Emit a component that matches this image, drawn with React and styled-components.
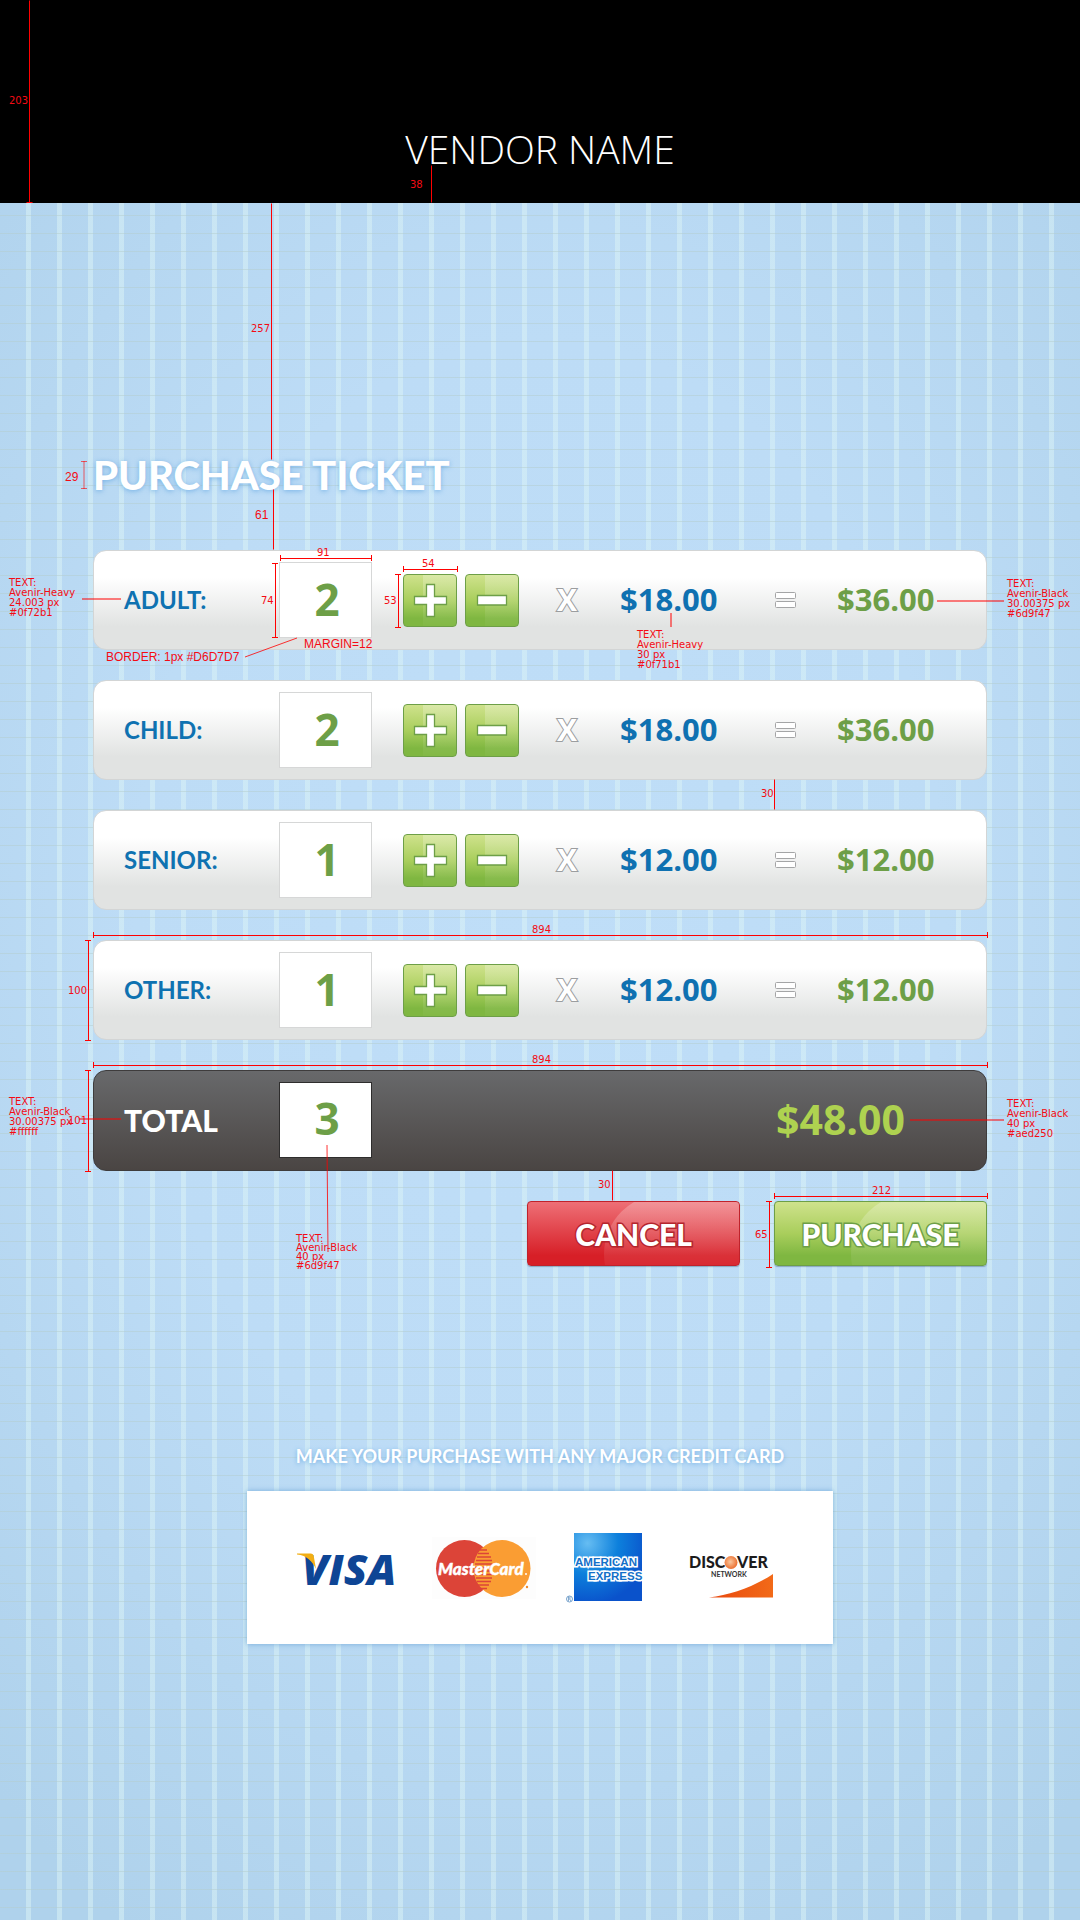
import React, { useState } from "react";
import styled, { createGlobalStyle, css } from "styled-components";

const GlobalStyle = createGlobalStyle`
  *, *::before, *::after { box-sizing: border-box; }
  body {
    margin: 0;
    background: #b3d6f0;
    font-family: Lato, "Open Sans", sans-serif;
  }
`;

const Page = styled.div`
  position: relative;
  display: flex;
  flex-direction: column;
  min-height: 100vh;
  overflow: hidden;
`;

const Header = styled.header`
  padding: 125px 24px 30px;
  background: #000;
  text-align: center;
`;

const VendorName = styled.h1`
  margin: 0;
  color: #fff;
  font-family: "Open Sans", sans-serif;
  font-size: 39px;
  font-weight: 300;
  line-height: 48px;
`;

const Backdrop = styled.main`
  flex: 1;
  display: flex;
  flex-direction: column;
  align-items: center;
  padding: 248px 24px 120px;
  background:
    repeating-linear-gradient(to bottom, transparent 0 12px, rgba(180, 205, 205, 0.5) 12px 13px, transparent 13px 18px),
    repeating-linear-gradient(to right, transparent 0 26px, rgba(220, 244, 246, 0.5) 26px 31px),
    radial-gradient(ellipse 75% 68% at 50% 42%, #bfdef8 0%, #bddcf6 50%, #afd2ec 100%);
`;

const Order = styled.form`
  display: flex;
  flex-direction: column;
  gap: 30px;
  width: 100%;
  max-width: 894px;
`;

const Title = styled.h2`
  margin: 0 0 21px;
  color: #fff;
  font-size: 40px;
  font-weight: 900;
  line-height: 48px;
  text-shadow: 0 1px 5px rgba(70, 150, 220, 0.6);
`;

const Row = styled.div`
  display: grid;
  grid-template-columns: 155fr 124fr 154fr 63fr 155fr 62fr 149fr;
  align-items: center;
  height: 100px;
  padding-left: 30px;
  border: 1px solid #d3d5d5;
  border-radius: 13px;
  background: linear-gradient(#fff 0%, #fff 27%, #e1e3e2 77%, #e1e3e2 100%);
`;

const TotalRow = styled(Row)`
  grid-template-columns: 155fr 124fr 373fr 210fr;
  height: 101px;
  padding-bottom: 2px;
  border-color: #3e3c3c;
  background: linear-gradient(#68696b, #4a4543);
`;

const Label = styled.label`
  color: ${(p) => (p.$total ? "#fff" : "#0f72b1")};
  font-size: ${(p) => (p.$total ? 30 : 24)}px;
  font-weight: ${(p) => (p.$total ? 900 : 700)};
  line-height: 36px;
`;

const Quantity = styled.input`
  width: 93px;
  height: 76px;
  padding: 0 0 3px 3px;
  border: 1px solid ${(p) => (p.$total ? "#2e2d2d" : "#d6d7d7")};
  border-radius: 0;
  outline: 0;
  background: #fff;
  color: #6d9f47;
  font: 700 44px "Open Sans", sans-serif;
  text-align: center;
`;

const Steppers = styled.div`
  display: flex;
  gap: 8px;
`;

const green = css`
  border: 1px solid #6d9f47;
  background: linear-gradient(#cfe28c 0%, #a9ce5c 50%, #7fb741 85%);
`;

const red = css`
  border: 1px solid #c0222b;
  background: linear-gradient(#ee6f76 0%, #d71f27 85%);
`;

const Glossy = styled.button`
  position: relative;
  overflow: hidden;
  padding: 0;
  border-radius: 4px;
  cursor: pointer;
  ${(p) => (p.$red ? red : green)}

  &::before {
    content: "";
    position: absolute;
    left: 36%;
    right: 0;
    top: -8px;
    height: 120px;
    border-radius: 60px 0 0 60px;
    background: linear-gradient(rgba(255, 255, 255, 0.28), rgba(255, 255, 255, 0.04) 62%);
  }
`;

const Stepper = styled(Glossy)`
  width: 54px;
  height: 53px;

  svg { position: relative; display: block; margin: 0 auto; }

  &::before {
    left: 19px;
    top: -64px;
    height: 208px;
    border-radius: 104px 0 0 104px;
    background: linear-gradient(rgba(255, 255, 255, 0.26) 30%, rgba(255, 255, 255, 0.02) 56%);
  }
`;

const Times = styled.span`
  color: #fff;
  font-family: "Open Sans", sans-serif;
  font-size: 30px;
  font-weight: 700;
  line-height: 36px;
  -webkit-text-stroke: 2px #9b9d9f;
  paint-order: stroke fill;
`;

const Price = styled.output`
  color: ${(p) => p.$color};
  font-family: "Open Sans", sans-serif;
  font-size: ${(p) => (p.$total ? 41 : 31)}px;
  font-weight: ${(p) => p.$weight};
  line-height: 36px;
  padding-bottom: 2px;
`;

const Actions = styled.div`
  display: flex;
  justify-content: flex-end;
  gap: 34px;
`;

const Action = styled(Glossy)`
  width: 213px;
  height: 65px;
  box-shadow: 0 1px 1px rgba(60, 90, 110, 0.4);
`;

const ActionText = styled.span`
  position: relative;
  color: #fff;
  font: 900 30px/36px Lato, "Open Sans", sans-serif;
  -webkit-text-stroke: 3px ${(p) => (p.$red ? "#b5252d" : "#6d9f47")};
  paint-order: stroke fill;
`;

const Payment = styled.section`
  display: flex;
  flex-direction: column;
  align-items: center;
  gap: 23px;
  width: 100%;
  margin-top: 178px;
`;

const PaymentTitle = styled.h3`
  margin: 0;
  color: #fff;
  font-size: 18px;
  font-weight: 700;
  line-height: 24px;
  text-align: center;
  text-shadow: 0 1px 4px rgba(70, 150, 220, 0.6);
`;

const Cards = styled.div`
  display: flex;
  justify-content: space-between;
  align-items: center;
  width: 100%;
  max-width: 586px;
  height: 153px;
  padding: 0 59px 0 50px;
  background: #fff;
  box-shadow: 0 0 5px rgba(70, 140, 200, 0.6);
`;

/* Measurement layer drawn over the design, centred with the order form. */
const SpecLayer = styled.div`
  position: absolute;
  top: 0;
  left: 50%;
  width: 1080px;
  height: 1300px;
  margin-left: -540px;
  pointer-events: none;

  > svg { position: absolute; top: 0; left: 0; }
`;

const Note = styled.span`
  position: absolute;
  left: ${(p) => p.$x}px;
  top: ${(p) => p.$y}px;
  color: #f40b14;
  font-family: "DejaVu Sans", Verdana, sans-serif;
  font-size: 10px;
  line-height: ${(p) => p.$line || 10}px;
  white-space: pre;
`;

const PlainNote = styled(Note)`
  font-family: "Liberation Sans", Arial, sans-serif;
  font-size: 12px;
  line-height: 14px;
`;

const PlusIcon = () => (
  <svg width="35" height="35" viewBox="0 0 35 35" aria-hidden="true">
    <path d="M13.500 1.500h8v12h12v8h-12v12h-8v-12h-12v-8h12z" fill="#fff" stroke="#6d9f47" strokeWidth="1.300" />
  </svg>
);

const MinusIcon = () => (
  <svg width="32" height="35" viewBox="0 0 32 35" aria-hidden="true">
    <path d="M1.500 12.500h29v9.500h-29z" fill="#fff" stroke="#6d9f47" strokeWidth="1.300" />
  </svg>
);

const EqualsIcon = () => (
  <svg width="21" height="17" viewBox="0 0 21 17" role="img" aria-label="equals">
    <rect x=".5" y=".5" width="20" height="6" rx="1" fill="#fff" stroke="#a4a5a6" />
    <rect x=".5" y="9.500" width="20" height="6" rx="1" fill="#fff" stroke="#a4a5a6" />
  </svg>
);

const Visa = () => (
  <svg width="104" height="60" viewBox="0 0 104 60" role="img" aria-label="Visa">
    <text x="5" y="47" fill="#0e4595" fontFamily="Open Sans" fontStyle="italic" fontWeight="800" fontSize="43">VISA</text>
    <path d="M0 15h6l9 8v-4L8 15z" fill="#fff" />
    <path d="M0 15.500h13.500c2 0 3 1 3.300 3L19 31C15 23 10 17.500 0 16.500z" fill="#f2ae14" />
  </svg>
);

const MasterCard = () => (
  <svg width="104" height="62" viewBox="0 0 104 62" role="img" aria-label="MasterCard">
    <rect width="104" height="62" fill="#fdfdfd" />
    <circle cx="32.500" cy="31.500" r="28.500" fill="#dc4438" />
    <circle cx="70" cy="31.500" r="28.500" fill="#fa9d33" />
    <g stroke="#dc4438" strokeWidth="1.300">
      <path d="M48 13h7M46 16.500h11M45 20h14M44 23.500h16M43 27h17M42 30.500h18M42 34h18M43 37.500h17M44 41h16M45 44.500h14M46 48h11M48 51.500h7" />
    </g>
    <text x="6" y="38" fill="#fff" stroke="#fff" strokeWidth=".4" fontFamily="Lato" fontStyle="italic" fontWeight="900" fontSize="17">MasterCard</text>
    <circle cx="94" cy="37" r="1" fill="#fff" />
    <circle cx="95" cy="50" r="1.200" fill="#ee8a2a" />
  </svg>
);

const Amex = () => (
  <svg width="92" height="70" viewBox="0 0 92 70" role="img" aria-label="American Express">
    <defs>
      <radialGradient id="amexGlow" cx="20%" cy="15%" r="90%">
        <stop offset="0" stopColor="#66bdf2" />
        <stop offset=".5" stopColor="#0d80dc" />
        <stop offset="1" stopColor="#0a52cb" />
      </radialGradient>
    </defs>
    <rect x="8" y="0" width="68" height="68" fill="url(#amexGlow)" />
    <g fontFamily="Liberation Sans" fontWeight="700" fontSize="11.500" fill="#1470c8" stroke="#fff" strokeWidth="3" paintOrder="stroke">
      <text x="9" y="33">AMERICAN</text>
      <text x="22" y="47">EXPRESS</text>
    </g>
    <circle cx="3.500" cy="66" r="3" fill="none" stroke="#3a78b4" strokeWidth=".7" />
    <path d="M2.500 68v-4h1.200q1.200 1 0 2h-1M3.800 66l1 2" fill="none" stroke="#3a78b4" strokeWidth=".6" />
  </svg>
);

const Discover = () => (
  <svg width="85" height="60" viewBox="0 0 85 60" role="img" aria-label="Discover Network">
    <defs>
      <radialGradient id="discoverBall" cx="45%" cy="45%" r="55%">
        <stop offset="0" stopColor="#fbc9a0" />
        <stop offset="1" stopColor="#ec7030" />
      </radialGradient>
      <linearGradient id="discoverSweep" x1="0" x2="1">
        <stop offset="0" stopColor="#e8480e" />
        <stop offset="1" stopColor="#f26a18" />
      </linearGradient>
    </defs>
    <g fontFamily="Lato" fontWeight="900" fontSize="16" fill="#1c1b1c">
      <text x="0" y="30">DISC</text>
      <text x="48" y="30">VER</text>
    </g>
    <circle cx="42" cy="24.500" r="6.500" fill="url(#discoverBall)" />
    <text x="22" y="39" fontFamily="Lato" fontWeight="700" fontSize="7" fill="#333">NETWORK</text>
    <path d="M20 59.500C42 57 66 48 84 36v23.500z" fill="url(#discoverSweep)" />
  </svg>
);

/* Bars with end ticks: [x1, y1, x2, y2] */
const spans = [
  [280, 558, 371, 558], [275, 563, 275, 637], [403, 569, 457, 569], [398, 574, 398, 627],
  [93, 935, 987, 935], [93, 1065, 987, 1065], [88, 940, 88, 1040], [88, 1070, 88, 1171],
  [774, 1196, 987, 1196], [769, 1201, 769, 1267],
];

/* Plain rules without ticks */
const rules = [
  [29, 0, 29, 202], [26, 202, 32, 202], [431, 165, 431, 202], [271, 203, 271, 459],
  [273, 489, 273, 549], [774, 779, 774, 809], [612, 1170, 612, 1200],
];

/* Half-transparent leaders from a note to its subject */
const leaders = [
  [82, 599, 121, 599], [671, 613, 671, 627], [937, 601, 1004, 601], [79, 1119, 121, 1119],
  [910, 1120, 1004, 1120],
];

const numbers = [
  [9, 96, "203"], [410, 180, "38"], [251, 324, "257"], [317, 548, "91"], [261, 596, "74"],
  [422, 559, "54"], [384, 596, "53"], [761, 789, "30"], [532, 925, "894"], [532, 1055, "894"],
  [68, 986, "100"], [68, 1116, "101"], [598, 1180, "30"], [872, 1186, "212"], [755, 1230, "65"],
  [9, 578, "TEXT:\nAvenir-Heavy\n24.003 px\n#0f72b1"],
  [637, 630, "TEXT:\nAvenir-Heavy\n30 px\n#0f71b1"],
  [1007, 579, "TEXT:\nAvenir-Black\n30.00375 px\n#6d9f47"],
  [9, 1097, "TEXT:\nAvenir-Black\n30.00375 px\n#ffffff"],
  [1007, 1099, "TEXT:\nAvenir-Black\n40 px\n#aed250"],
];

const plainNotes = [
  [65, 470, "29"], [255, 508, "61"], [106, 650, "BORDER: 1px #D6D7D7"], [304, 637, "MARGIN=12"],
];

function Tick({ x, y, vertical }) {
  const d = vertical ? `M${x - 3} ${y + 0.5}h6` : `M${x + 0.5} ${y - 3}v6`;
  return <path d={d} />;
}

function Specs() {
  return (
    <SpecLayer>
      <svg width="1080" height="1300" stroke="#ff0000" fill="none" aria-hidden="true">
        {spans.map(([x1, y1, x2, y2]) => (
          <g key={`${x1}-${y1}`}>
            <path d={`M${x1 + 0.5} ${y1 + 0.5}L${x2 + 0.5} ${y2 + 0.5}`} />
            <Tick x={x1} y={y1} vertical={x1 === x2} />
            <Tick x={x2} y={y2} vertical={x1 === x2} />
          </g>
        ))}
        {rules.map(([x1, y1, x2, y2]) => (
          <path key={`${x1}-${y1}`} d={`M${x1 + 0.5} ${y1 + 0.5}L${x2 + 0.5} ${y2 + 0.5}`} />
        ))}
        {leaders.map(([x1, y1, x2, y2]) => (
          <path key={`${x1}-${y1}`} strokeWidth="2" opacity=".5" d={`M${x1} ${y1}L${x2} ${y2}`} />
        ))}
        <path opacity=".6" d="M84 461v28M81 461.500h6M81 488.500h6" />
        <path d="M245 657L297 638" opacity=".8" />
        <path d="M327 1145L328 1252" opacity=".8" />
      </svg>
      {numbers.map(([x, y, text]) => (
        <Note key={`${x}-${y}`} $x={x} $y={y}>{text}</Note>
      ))}
      {plainNotes.map(([x, y, text]) => (
        <PlainNote key={text} $x={x} $y={y}>{text}</PlainNote>
      ))}
      <Note $x={296} $y={1234} $line={9}>{"TEXT:\nAvenir-Black\n40 px\n#6d9f47"}</Note>
    </SpecLayer>
  );
}

const tickets = [
  { id: "adult", label: "ADULT:", count: 2, price: "$18.00", sum: "$36.00" },
  { id: "child", label: "CHILD:", count: 2, price: "$18.00", sum: "$36.00" },
  { id: "senior", label: "SENIOR:", count: 1, price: "$12.00", sum: "$12.00" },
  { id: "other", label: "OTHER:", count: 1, price: "$12.00", sum: "$12.00" },
];

function TicketRow({ id, label, count, price, sum }) {
  const [value, setValue] = useState(count);
  return (
    <Row>
      <Label htmlFor={id}>{label}</Label>
      <Quantity id={id} inputMode="numeric" value={value} onChange={(e) => setValue(Number(e.target.value) || 0)} />
      <Steppers>
        <Stepper type="button" aria-label={`Add ${id}`} onClick={() => setValue(value + 1)}><PlusIcon /></Stepper>
        <Stepper type="button" aria-label={`Remove ${id}`} onClick={() => setValue(Math.max(0, value - 1))}><MinusIcon /></Stepper>
      </Steppers>
      <Times>X</Times>
      <Price $color="#0f71b1" $weight={700}>{price}</Price>
      <EqualsIcon />
      <Price htmlFor={id} $color="#6d9f47" $weight={700}>{sum}</Price>
    </Row>
  );
}

export default function App() {
  return (
    <Page>
      <GlobalStyle />
      <Header><VendorName>VENDOR NAME</VendorName></Header>
      <Backdrop>
        <Order onSubmit={(e) => e.preventDefault()}>
          <Title>PURCHASE TICKET</Title>
          {tickets.map((t) => <TicketRow key={t.id} {...t} />)}
          <TotalRow>
            <Label htmlFor="total" $total>TOTAL</Label>
            <Quantity id="total" value="3" readOnly $total />
            <span />
            <Price $color="#aed250" $weight={700} $total>$48.00</Price>
          </TotalRow>
          <Actions>
            <Action type="button" $red><ActionText $red>CANCEL</ActionText></Action>
            <Action type="submit"><ActionText>PURCHASE</ActionText></Action>
          </Actions>
        </Order>
        <Payment>
          <PaymentTitle>MAKE YOUR PURCHASE WITH ANY MAJOR CREDIT CARD</PaymentTitle>
          <Cards><Visa /><MasterCard /><Amex /><Discover /></Cards>
        </Payment>
      </Backdrop>
      <Specs />
    </Page>
  );
}
